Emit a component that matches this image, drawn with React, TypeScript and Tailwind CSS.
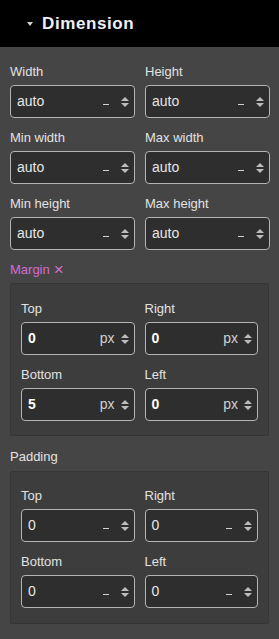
import React from "react";

const font = { fontFamily: '"Liberation Sans", Arial, sans-serif' };

function Spinner() {
  return (
    <div className="flex flex-col items-center gap-[2px]">
      <div className="w-0 h-0 border-l-[4px] border-r-[4px] border-b-[4px] border-l-transparent border-r-transparent border-b-[#bdbdbd]" />
      <div className="w-0 h-0 border-l-[4px] border-r-[4px] border-t-[4px] border-l-transparent border-r-transparent border-t-[#bdbdbd]" />
    </div>
  );
}

function Field({
  label,
  value,
  unit,
  bold,
}: {
  label: string;
  value: string;
  unit?: string;
  bold?: boolean;
}) {
  return (
    <div className="flex flex-col">
      <div className="h-[25px] pt-[4px] leading-[16px] text-[13px] text-[#e2e2e2]">{label}</div>
      <div className="h-[33px] rounded-[4px] border border-[#b4b4b4] bg-[#2e2e2e] flex items-center pl-[6px] pr-[5px]">
        <span className={`flex-1 text-[14px] text-[#e6e6e6] ${bold ? "font-bold text-white" : ""}`}>{value}</span>
        {unit ? (
          <span className="text-[14px] text-[#d0d0d0] mr-[6px]">{unit}</span>
        ) : (
          <span className="w-[6px] h-[1px] bg-[#d0d0d0] mt-[6px] mr-[12px]" />
        )}
        <Spinner />
      </div>
    </div>
  );
}

export default function App() {
  return (
    <div style={font} className="w-[279px] h-[639px] bg-[#454545] overflow-hidden">
      <div className="h-[47px] bg-black flex items-center pl-[27px]">
        <div className="w-0 h-0 border-l-[3px] border-r-[3px] border-t-[4px] border-l-transparent border-r-transparent border-t-[#cfcfcf] mr-[9px] mt-[1px]" />
        <span className="text-[17px] font-bold tracking-[0.6px] text-[#eef0f8]">Dimension</span>
      </div>
      <div className="pt-[13px] pl-[10px] pr-[9px] flex flex-col">
        <div className="grid grid-cols-2 gap-x-[10px] gap-y-[8px]">
          <Field label="Width" value="auto" />
          <Field label="Height" value="auto" />
          <Field label="Min width" value="auto" />
          <Field label="Max width" value="auto" />
          <Field label="Min height" value="auto" />
          <Field label="Max height" value="auto" />
        </div>
        <div className="mt-[8px] h-[25px] pt-[4px] leading-[16px] text-[13px] text-[#d46cd4] flex items-start">
          <span>Margin</span>
          <span className="ml-[4px] text-[17px] leading-[16px]">×</span>
        </div>
        <div className="mr-[1px] border border-[#363636] rounded-[2px] bg-[#3d3d3d] pt-[13px] pb-[14px] px-[10px]">
          <div className="grid grid-cols-2 gap-x-[10px] gap-y-[8px]">
            <Field label="Top" value="0" unit="px" bold />
            <Field label="Right" value="0" unit="px" bold />
            <Field label="Bottom" value="5" unit="px" bold />
            <Field label="Left" value="0" unit="px" bold />
          </div>
        </div>
        <div className="mt-[10px] h-[25px] pt-[3px] leading-[16px] text-[13px] text-[#e2e2e2]">Padding</div>
        <div className="mr-[1px] border border-[#363636] rounded-[2px] bg-[#3d3d3d] pt-[12px] pb-[15px] px-[10px]">
          <div className="grid grid-cols-2 gap-x-[10px] gap-y-[8px]">
            <Field label="Top" value="0" />
            <Field label="Right" value="0" />
            <Field label="Bottom" value="0" />
            <Field label="Left" value="0" />
          </div>
        </div>
      </div>
    </div>
  );
}
